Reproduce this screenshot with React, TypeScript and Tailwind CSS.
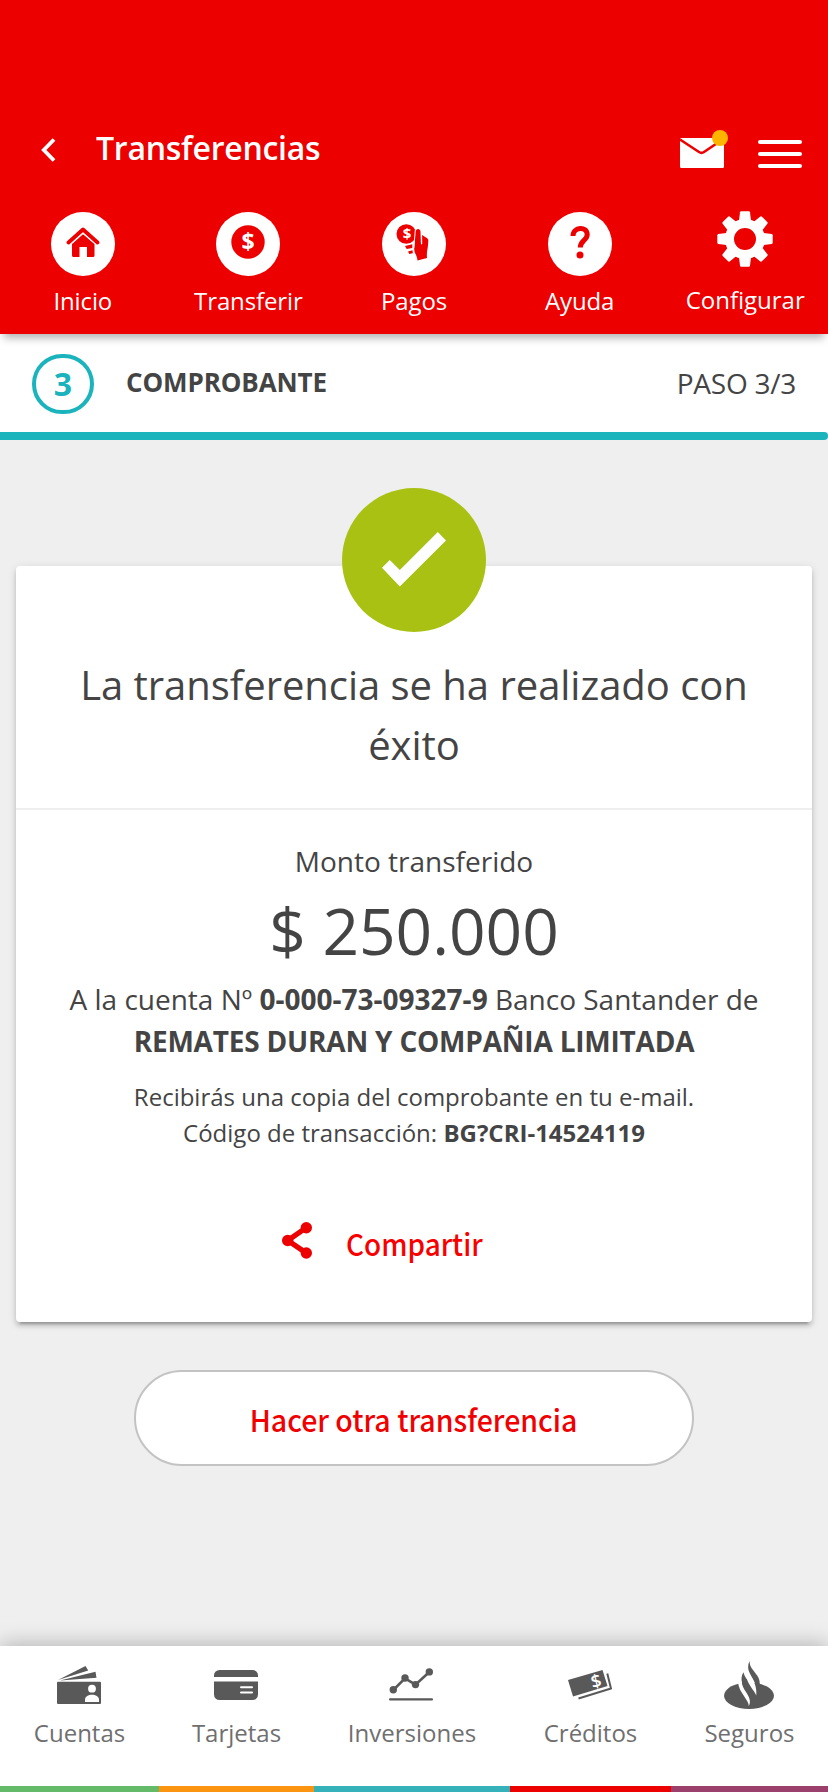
import React from "react";

// --- Iconos del menú superior ---
const HomeIcon = () => (
  <svg width="34" height="32" viewBox="0 0 34 32" fill="none">
    <path d="M2.500 16.500 17 3.500l14.500 13" stroke="#ec0000" strokeWidth="3.800" strokeLinecap="round" strokeLinejoin="round" />
    <path d="M6 18 17 8.300l11.500 9.700v11.500a1.500 1.500 0 0 1-1.500 1.500h-6V21h-7.500v10H7.500A1.500 1.500 0 0 1 6 29.500Z" fill="#ec0000" />
    <path d="M4.500 18.300 17 7.200l12.500 11.100" stroke="white" strokeWidth="1" />
  </svg>
);

const DollarIcon = () => (
  <svg width="34" height="34" viewBox="0 0 34 34">
    <circle cx="17" cy="17" r="16.700" fill="#ec0000" />
    <text x="17" y="25" textAnchor="middle" fill="white" className="font-['Open_Sans'] text-[23px] font-bold">
      $
    </text>
  </svg>
);

const PayIcon = () => (
  <svg width="64" height="64" viewBox="0 0 64 64">
    <circle cx="24.300" cy="22" r="9.800" fill="#ec0000" />
    <text x="25" y="27.300" textAnchor="middle" fill="white" className="font-['Open_Sans'] text-[15px] font-bold">
      $
    </text>
    <path
      d="M33.500 19.500c.7-3.600 4.800-3.400 5 .2l.4 11.800c.1 1.200 1.300 1.200 1.300 0l-.1-8.500 4.700 2.900c1.200.8 1.600 1.600 1.500 3-.2 4-.5 7-1.200 10.200-.3 2.400-.3 4.500-.1 7L35.500 48.500c-.4-3-.9-4.500-2-6.500-.9-1.600-1.400-3.500-1.300-6Z"
      fill="#ec0000"
    />
    <path d="M33.300 18 31.800 36" stroke="white" strokeWidth="1" />
    <path d="m23 34 7.300-1.700v3.600l-5.600 1ZM26 39.500l4.500-1.200.3 3-3.500.6Z" fill="#ec0000" />
  </svg>
);

const HelpIcon = () => (
  <svg width="20" height="34" viewBox="0 0 20 34" fill="none">
    <path d="M3 11C3 1.500 17.200 1 17.200 9.500c0 6-6.900 6-6.900 13" stroke="#ec0000" strokeWidth="5" />
    <circle cx="10" cy="30" r="3.500" fill="#ec0000" />
  </svg>
);

const TOOTH = "M22 9.500 23 1.300Q23.200.3 24.200.3h7.600Q32.800.3 33 1.300L34 9.500Z";
const GearIcon = () => (
  <svg width="56" height="56" viewBox="0 0 56 56" fill="white">
    {[0, 45, 90, 135, 180, 225, 270, 315].map((deg) => (
      <path key={deg} d={TOOTH} transform={`rotate(${deg} 28 28)`} />
    ))}
    <circle cx="28" cy="28" r="15.500" fill="none" stroke="white" strokeWidth="9" />
  </svg>
);

// --- Iconos del menú inferior ---
const AccountsIcon = () => (
  <svg width="44" height="38" viewBox="0 0 44 38" fill="#595959">
    <path d="M1 14 28.500 0l2.700 4.500ZM3 14.600 38.500 5.800l1 6Z" />
    <rect y="15.700" width="44" height="22.300" rx="1" />
    <circle cx="35" cy="22.700" r="3.900" fill="white" />
    <path d="M28 36v-2.500c0-6.500 14-6.500 14 0V36Z" fill="white" />
  </svg>
);

const CardIcon = () => (
  <svg width="44" height="30" viewBox="0 0 44 30" fill="#595959">
    <path d="M0 7V5.500A5.500 5.500 0 0 1 5.500 0h33A5.500 5.500 0 0 1 44 5.500V7ZM0 11.500h44v13a5.500 5.500 0 0 1-5.500 5.500h-33A5.500 5.500 0 0 1 0 24.500Z" />
    <path d="M27 17.300h11M27 22.600h11" stroke="white" strokeWidth="2" strokeLinecap="round" />
  </svg>
);

const ChartIcon = () => (
  <svg width="44" height="34" viewBox="0 0 44 34" fill="#595959">
    <path d="M4.300 22 16 10.300 26.500 16.600 40.300 4" fill="none" stroke="#595959" strokeWidth="2.600" />
    <circle cx="4.300" cy="21.700" r="3.700" />
    <circle cx="16" cy="10" r="3.700" />
    <circle cx="26.500" cy="16.600" r="3.700" />
    <circle cx="40.300" cy="3.900" r="3.700" />
    <rect y="30.200" width="44" height="2.300" rx="1" />
  </svg>
);

const LoanIcon = () => (
  <svg width="44" height="32" viewBox="0 0 44 32" fill="#595959">
    <path d="M0 11 34.500 1 39.500 17 5 27.500Z" />
    <path d="M39.300 4.500 43 19.500 10.500 29.500" fill="none" stroke="#595959" strokeWidth="2" />
    <text x="28" y="18.500" textAnchor="middle" fill="white" transform="rotate(-13 28 12)" className="font-['Open_Sans'] text-[18px] font-semibold">
      $
    </text>
  </svg>
);

const FlameIcon = () => (
  <svg width="50" height="48" viewBox="0 0 50 48" fill="#595959">
    <ellipse cx="25" cy="34.700" rx="25" ry="13.200" />
    <path d="M19.500 11.200C17 15 17 20 19 24l7 13h7l-3-11-8-9c-1.500-2-2-4-2.500-5.800Z" />
    <path d="M25.500 0c-2 4.500-1.800 8.500.4 12.500L31 22l2 12 4-1.500-1.300-10.500c0-3-1-5-2.200-7l-6-8C26.300 5 25.700 3 25.500 0Z" />
    <path d="M14 21.300 17.600 20.500C18 25 20 28 22 31c3 5 5.500 9 2.800 14C25 39 15 32 14 21.300Z" fill="white" />
    <path d="M22.300 16.500 28 17c2 4 5 9 4.300 17.500C30 29 25 25 22.300 16.500Z" fill="white" />
  </svg>
);

const ShareIcon = () => (
  <svg width="30" height="38" viewBox="0 0 30 38" fill="#ec0000">
    <path d="M24.300 5.700 5.700 18.500 24.300 31" fill="none" stroke="#ec0000" strokeWidth="5.200" />
    <circle cx="5.700" cy="18.500" r="5.700" />
    <circle cx="24.300" cy="5.800" r="5.700" />
    <circle cx="24.300" cy="31" r="5.700" />
  </svg>
);

const MENU = [
  { label: "Inicio", icon: <HomeIcon />, offset: "-mt-1" },
  { label: "Transferir", icon: <DollarIcon />, offset: "-mt-1" },
  { label: "Pagos", icon: <PayIcon />, offset: "" },
  { label: "Ayuda", icon: <HelpIcon />, offset: "-mt-1" },
];

const TABS = [
  { label: "Cuentas", icon: <AccountsIcon />, bar: "bg-[#63ba68]" },
  { label: "Tarjetas", icon: <CardIcon />, bar: "bg-[#fb9511]" },
  { label: "Inversiones", icon: <ChartIcon />, bar: "bg-[#35b1b9]" },
  { label: "Créditos", icon: <LoanIcon />, bar: "bg-[#ec0000]" },
  { label: "Seguros", icon: <FlameIcon />, bar: "bg-[#9b3f6d]" },
];

const Header = () => (
  <header className="relative z-10 h-[334px] bg-[#ec0000] pt-[120px] text-white shadow-[0_8px_8px_-4px_rgba(0,0,0,0.3)]">
    <div className="flex h-14 items-start pl-[41px] pr-[26px]">
      <button type="button" aria-label="Volver" className="mt-[18px]">
        <svg width="15" height="24" viewBox="0 0 15 24" fill="none">
          <path d="M13 1.500 2.800 12 13 22.500" stroke="white" strokeWidth="3.800" />
        </svg>
      </button>
      <h1 className="ml-10 text-[32px] font-semibold leading-[56px] tracking-[-0.25px]">Transferencias</h1>
      <button type="button" aria-label="Mensajes" className="ml-auto mt-2.5">
        <svg width="48" height="38" viewBox="0 0 48 38" fill="none">
          <rect y="8" width="44" height="30" rx="1.500" fill="white" />
          <path d="M0 9.500 19 22Q21.500 23.700 24 22L44 8.500" stroke="#ec0000" strokeWidth="2.600" />
          <circle cx="40" cy="8" r="8" fill="#ffb400" />
        </svg>
      </button>
      <button type="button" aria-label="Menú" className="ml-[30px] mt-5 flex flex-col gap-2">
        <span className="h-1 w-11 rounded-full bg-white" />
        <span className="h-1 w-11 rounded-full bg-white" />
        <span className="h-1 w-11 rounded-full bg-white" />
      </button>
    </div>
    <nav className="grid grid-cols-5 pt-9">
      {MENU.map(({ label, icon, offset }) => (
        <a key={label} className="flex flex-col items-center">
          <span className="flex size-16 items-center justify-center rounded-full bg-white">
            <span className={offset}>{icon}</span>
          </span>
          <span className="mt-2 text-2xl leading-[34px] tracking-[-0.12px]">{label}</span>
        </a>
      ))}
      <a className="flex flex-col items-center">
        <span className="-mt-px h-16">
          <GearIcon />
        </span>
        <span className="mt-2 text-2xl leading-[34px]">Configurar</span>
      </a>
    </nav>
  </header>
);

const StepBar = () => (
  <section>
    <div className="flex h-[98px] items-start bg-white px-8 pt-5">
      <span className="flex h-[60px] w-[62px] items-center justify-center rounded-full border-4 border-[#1bb3bc] text-[32px] font-bold leading-none text-[#1bb3bc]">
        3
      </span>
      <h2 className="ml-8 text-[26px] font-bold leading-[56px] tracking-[-0.1px]">COMPROBANTE</h2>
      <span className="ml-auto text-[28px] leading-[58px] tracking-[-0.25px]">PASO 3/3</span>
    </div>
    <div className="h-2 rounded-r-full bg-[#1bb3bc]" />
  </section>
);

const Receipt = () => (
  <article className="relative mx-4 mt-[126px] h-[756px] rounded bg-white text-center shadow-[0_6px_2px_-4px_rgba(0,0,0,0.2),0_4px_4px_rgba(0,0,0,0.14),0_2px_10px_rgba(0,0,0,0.12)]">
    <span className="absolute -top-[78px] left-[326px] size-36 rounded-full bg-[#a9c112]">
      <svg width="144" height="144" viewBox="0 0 144 144" fill="white">
        <path d="m40 79.700 7.800-7.700 10 10L95.800 44l8.200 8.500-46.200 46Z" />
      </svg>
    </span>
    <div className="h-[244px] border-b-2 border-[#efefef] px-12 pt-[89px]">
      <p className="text-[40px] leading-[60px] tracking-[-0.04px]">La transferencia se ha realizado con éxito</p>
    </div>
    <p className="pt-8 text-[28px] leading-[38px]">Monto transferido</p>
    <p className="mt-[7px] text-[64px] leading-[88px]">$ 250.000</p>
    <p className="mt-[3px] text-[28px] leading-[42px]">
      A la cuenta Nº <b>0-000-73-09327-9</b> Banco Santander de
      <br />
      <b className="tracking-[-0.2px]">REMATES DURAN Y COMPAÑIA LIMITADA</b>
    </p>
    <p className="mt-[17px] text-2xl leading-9">
      Recibirás una copia del comprobante en tu e-mail.
      <br />
      Código de transacción: <b>BG?CRI-14524119</b>
    </p>
    <button
      type="button"
      className="mt-[71px] flex items-start pl-[266px] font-['Noto_Sans_CJK_SC',sans-serif] text-[30px] font-medium leading-[42px] text-[#f80000]"
    >
      <ShareIcon />
      <span className="ml-[34px] origin-left scale-x-93">Compartir</span>
    </button>
  </article>
);

const TabBar = () => (
  <footer className="mt-auto grid h-[146px] grid-cols-[159px_155px_196px_161px_157px] bg-white shadow-[0_-2px_20px_rgba(0,0,0,0.25)]">
    {TABS.map(({ label, icon, bar }) => (
      <a key={label} className="flex flex-col items-center text-2xl text-[#6f6f6f]">
        <span className="flex h-[78px] items-center justify-center pr-0.5">{icon}</span>
        <span className="-mt-2 leading-[34px]">{label}</span>
        <span className={`mt-auto h-1.5 w-full ${bar}`} />
      </a>
    ))}
  </footer>
);

const App = () => {
  return (
    <div className="flex h-[1792px] w-[828px] flex-col overflow-hidden bg-[#efefef] font-['Open_Sans',sans-serif] text-[#444444]">
      <Header />
      <StepBar />
      <Receipt />
      <button
        type="button"
        className="mx-auto mt-12 h-24 w-[560px] rounded-full border-2 border-[#c3c3c3] bg-white pt-0.5 font-['Noto_Sans_CJK_SC',sans-serif] text-[30px] font-medium text-[#f00000]"
      >
        <span className="inline-block scale-x-95">Hacer otra transferencia</span>
      </button>
      <TabBar />
    </div>
  );
};

export default App;
